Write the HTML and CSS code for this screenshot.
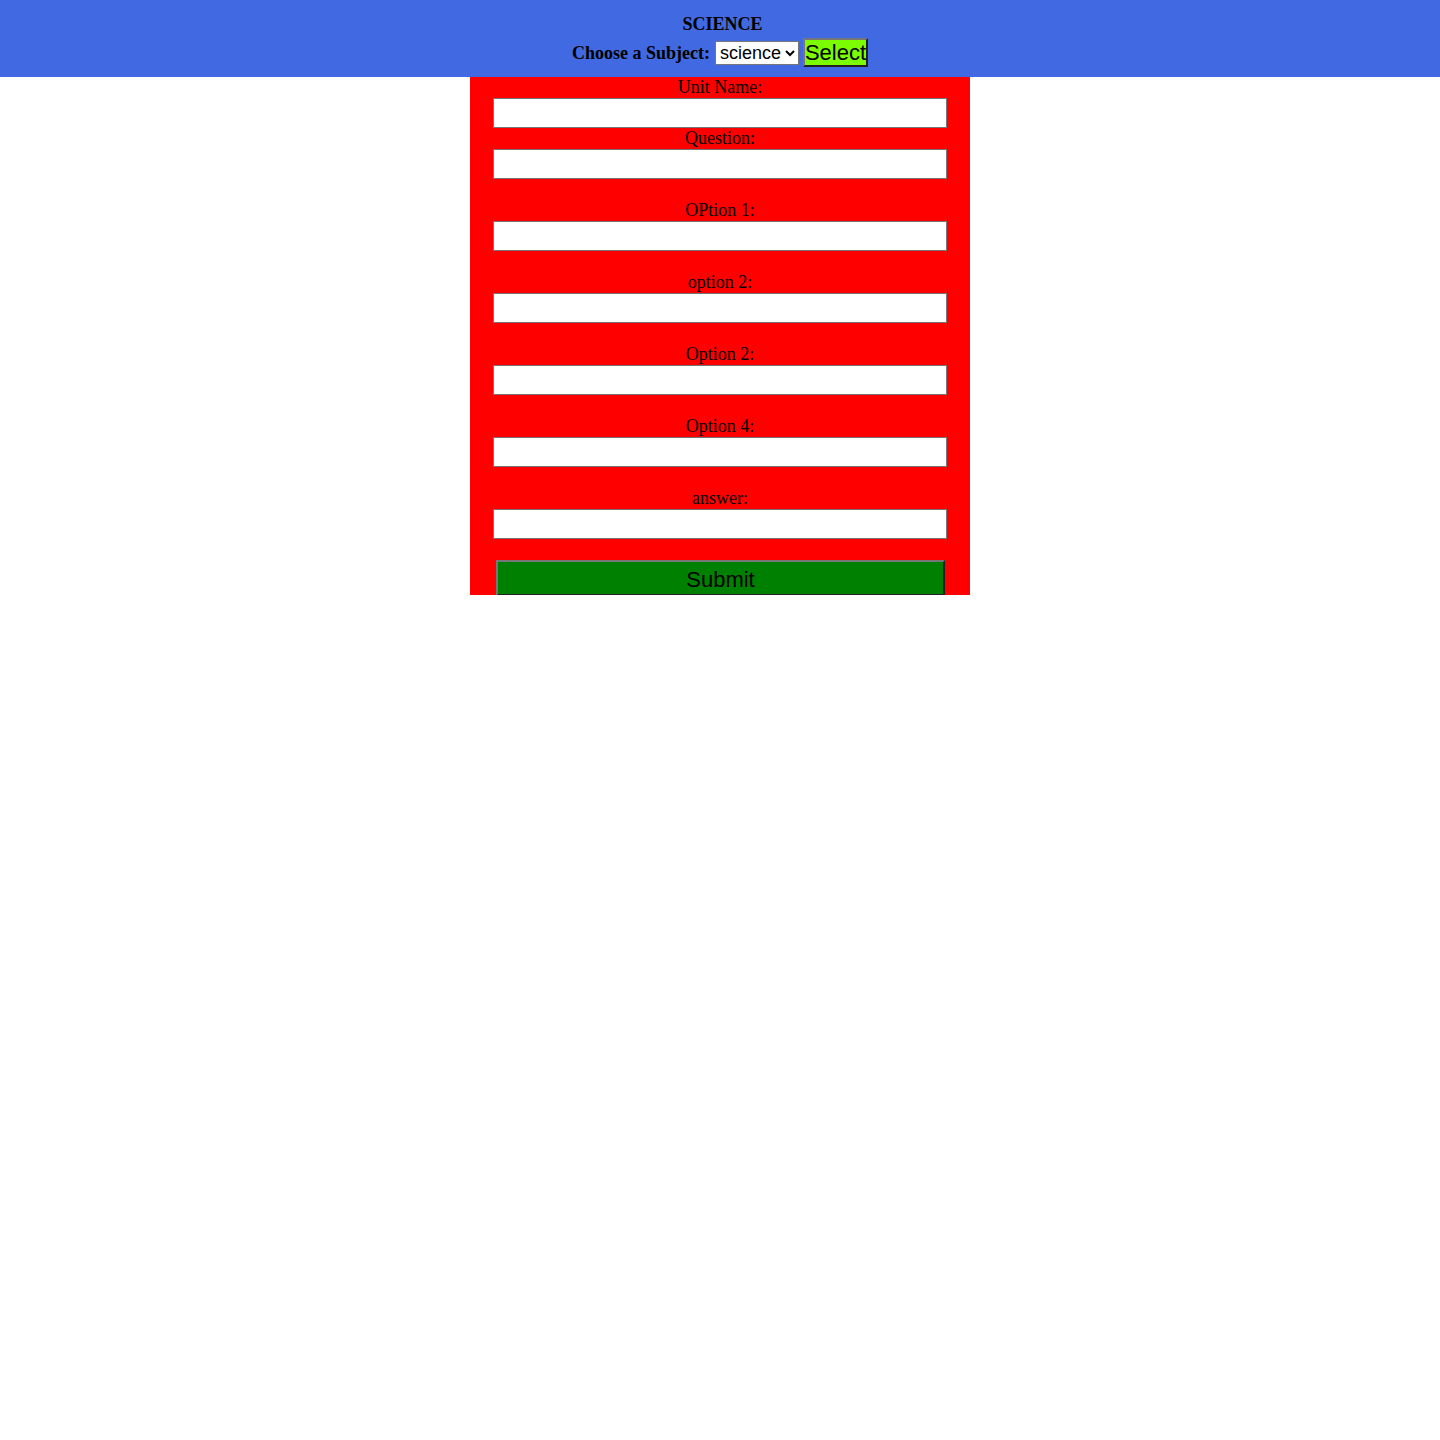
FILE: index.html
```html
<!DOCTYPE html>
<html>
<head>
<meta charset="utf-8">
<link rel="stylesheet" href="styles.css">
</head>
<body>
<header class="top">
  <div class="title">SCIENCE</div>
  <form class="pick">
    <label class="pick-label" for="subj">Choose a Subject:</label>
    <select id="subj" class="pick-select">
      <option>science</option>
    </select>
    <button type="button" class="pick-btn">Select</button>
  </form>
</header>
<form class="card">
  <label class="lbl">Unit Name:</label>
  <input class="field" type="text">
  <label class="lbl">Question:</label>
  <input class="field" type="text">
  <div class="spacer"></div>
  <label class="lbl">OPtion 1:</label>
  <input class="field" type="text">
  <div class="spacer"></div>
  <label class="lbl">option 2:</label>
  <input class="field" type="text">
  <div class="spacer"></div>
  <label class="lbl">Option 2:</label>
  <input class="field" type="text">
  <div class="spacer"></div>
  <label class="lbl">Option 4:</label>
  <input class="field" type="text">
  <div class="spacer"></div>
  <label class="lbl">answer:</label>
  <input class="field" type="text">
  <div class="spacer"></div>
  <button type="button" class="submit">Submit</button>
</form>
</body>
</html>
```
FILE: styles.css
```css
html, body {
  margin: 0;
  padding: 0;
  background: #ffffff;
  font-family: "Liberation Serif", "Times New Roman", serif;
  color: #000;
}
.top {
  background: #4169e1;
  height: 77px;
  box-sizing: border-box;
  padding-top: 14px;
  display: flex;
  flex-direction: column;
  align-items: center;
}
.title {
  font-weight: bold;
  font-size: 18px;
  line-height: 21px;
  height: 21px;
  padding-left: 5px;
}
.pick {
  margin: 3px 0 0 0;
  display: flex;
  align-items: center;
  height: 29px;
}
.pick-label {
  font-weight: bold;
  font-size: 18px;
  margin-right: 5px;
  padding-top: 2px;
}
.pick-select {
  font-family: "Liberation Sans", Arial, sans-serif;
  font-size: 18px;
  height: 24px;
  width: 84px;
  border: 1px solid #767676;
  border-radius: 0;
  background: #fff;
  color: #000;
  padding: 0;
  margin: 0 4px 0 0;
}
.pick-btn {
  font-family: "Liberation Sans", Arial, sans-serif;
  font-size: 22px;
  background: #7cfc00;
  border: 2px outset #767676;
  height: 29px;
  padding: 0;
  line-height: 25px;
  color: #000;
  margin: 0;
}
.card {
  width: 500px;
  margin: 0 auto;
  background: #ff0000;
  display: flex;
  flex-direction: column;
  align-items: center;
  height: 518px;
  overflow: hidden;
}
.card > * {
  flex: none;
}
.lbl {
  font-size: 18px;
  line-height: 21px;
  height: 21px;
}
.field {
  box-sizing: border-box;
  width: 454px;
  height: 30px;
  border: 1px solid #767676;
  background: #fff;
  margin: 0;
  padding: 0 2px;
}
.spacer {
  height: 21px;
}
.submit {
  box-sizing: border-box;
  width: 449px;
  height: 36px;
  background: #008000;
  border: 2px outset #767676;
  font-family: "Liberation Sans", Arial, sans-serif;
  font-size: 22px;
  color: #000;
  margin: 0 0 0 1px;
  padding: 3px 0 0 0;
}
```
